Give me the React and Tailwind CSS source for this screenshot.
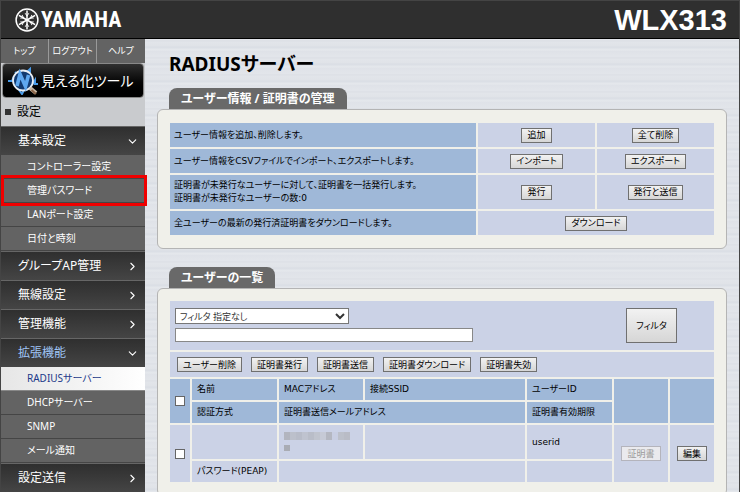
import { ChevronDown, ChevronRight } from 'lucide-react';
import clsx from 'clsx';

const menu = [
  {
    label: '基本設定',
    open: true,
    items: ['コントローラー設定', '管理パスワード', 'LANポート設定', '日付と時刻'],
  },
  { label: 'グループAP管理' },
  { label: '無線設定' },
  { label: '管理機能' },
  {
    label: '拡張機能',
    open: true,
    active: true,
    items: ['RADIUSサーバー', 'DHCPサーバー', 'SNMP', 'メール通知'],
  },
  { label: '設定送信' },
];

const highlighted = '管理パスワード';
const current = 'RADIUSサーバー';

const bulkActions = ['ユーザー削除', '証明書発行', '証明書送信', '証明書ダウンロード', '証明書失効'];

function Button({ children, className, ...props }) {
  return (
    <button
      type="button"
      className={clsx(
        'h-[15px] whitespace-nowrap border border-[#707070] bg-linear-to-b from-[#f2f2f2] to-[#d6d6d6] px-[5px] text-[9px] leading-[12px] text-black disabled:border-[#b4b4bc] disabled:from-[#eaeaee] disabled:to-[#eaeaee] disabled:text-[#9a9a9a]',
        className
      )}
      {...props}
    >
      {children}
    </button>
  );
}

function TuningForkMark() {
  return (
    <svg viewBox="0 0 24 24" className="size-6" fill="none" stroke="#fff" aria-hidden="true">
      <circle cx="12" cy="12" r="10.9" strokeWidth="1.5" />
      {[0, 60, 120, 180, 240, 300].map((deg) => (
        <g key={deg} transform={`rotate(${deg} 12 12)`}>
          <path d="M12 12V2.6" strokeWidth="1.5" />
          <path d="M10.2 5.2L12 8.2L13.8 5.2" strokeWidth="0.9" />
        </g>
      ))}
    </svg>
  );
}

function WaveLens() {
  return (
    <svg viewBox="0 0 32 28" className="h-7 w-8 shrink-0" fill="none" aria-hidden="true">
      <path
        d="M1 14H5L7 9M8 5L11 8M12 23L15 27L17 23M20 5L23 2V7M25 18L28 13V17H31"
        stroke="#4a9be8"
        strokeWidth="2"
      />
      <circle cx="16" cy="13.5" r="10" fill="#123a70" stroke="#e8eef5" strokeWidth="1.8" />
      <path d="M10 19L13 7L18.5 19.5L21.5 8" stroke="#5fa8f0" strokeWidth="3.6" />
      <path d="M23 21L29 26" stroke="#c9b8a4" strokeWidth="4" />
      <path d="M24.5 23L29 27" stroke="#8a6448" strokeWidth="2" />
    </svg>
  );
}

function Header() {
  return (
    <header className="flex h-[38px] items-center justify-between border-b border-black bg-[#2f2f2f] pr-3 pl-3.5 text-white">
      <a href="#top" className="flex items-center gap-0.5" aria-label="YAMAHA">
        <TuningForkMark />
        <span className="font-['Liberation_Sans_Narrow','Roboto_Condensed','Open_Sans_Condensed','Liberation_Sans',sans-serif] text-[22px] leading-6 font-bold">
          YAMAHA
        </span>
      </a>
      <span className="font-['Liberation_Sans',sans-serif] text-[29px] leading-8 font-bold">
        WLX313
      </span>
    </header>
  );
}

function MenuItem({ label }) {
  const isCurrent = label === current;
  return (
    <li
      className={clsx(
        'relative h-6 border-b',
        isCurrent ? 'border-[#888] bg-linear-to-r from-[#e6e6e6] to-white' : 'border-[#454545] bg-[#636363]'
      )}
    >
      <a
        href="#item"
        className={clsx(
          'flex h-full items-center pl-[26px] text-[10px]',
          isCurrent ? 'text-[#1c3a8a]' : 'text-white'
        )}
      >
        {label}
      </a>
      {label === highlighted && (
        <span className="pointer-events-none absolute -top-1 -right-0.5 -bottom-1 left-0 z-10 border-3 border-[#f00000]" />
      )}
    </li>
  );
}

function Sidebar() {
  return (
    <nav className="w-36 shrink-0 bg-[#636363]">
      <div className="grid h-6 grid-cols-3 divide-x divide-[#999] text-[9px] text-white">
        {['トップ', 'ログアウト', 'ヘルプ'].map((label) => (
          <a key={label} href="#nav" className="flex items-center justify-center whitespace-nowrap">
            {label}
          </a>
        ))}
      </div>
      <div className="bg-[#c9cbce] px-px">
        <a
          href="#visualize"
          className="flex h-[35px] items-center gap-0.5 rounded-sm border border-[#888] bg-linear-to-b from-[#303030] via-[#0a0a0a] to-black pl-1 text-[14px] whitespace-nowrap text-white"
        >
          <WaveLens />
          見える化ツール
        </a>
        <h2 className="flex h-7 items-center gap-1.5 pl-[3px] text-[12px] text-black">
          <span className="size-1.5 bg-[#333]" />
          設定
        </h2>
      </div>
      <ul>
        {menu.map(({ label, open, active, items }) => {
          const Chevron = open ? ChevronDown : ChevronRight;
          return (
            <li key={label}>
              <button
                type="button"
                aria-expanded={!!open}
                className={clsx(
                  'flex h-[29px] w-full items-center justify-between border-t border-[#666] bg-linear-to-b from-[#2f2f2f] to-[#454545] pr-1.5 pl-[17px] text-[12px]',
                  active ? 'text-[#9fc4f5]' : 'text-white'
                )}
              >
                {label}
                <Chevron size={13} strokeWidth={2} className="text-white" />
              </button>
              {items && (
                <ul>
                  {items.map((item) => (
                    <MenuItem key={item} label={item} />
                  ))}
                </ul>
              )}
            </li>
          );
        })}
      </ul>
    </nav>
  );
}

function Panel({ title, className, children }) {
  return (
    <section className={clsx('flex flex-col', className)}>
      <h2 className="ml-3 flex h-[21px] items-center self-start rounded-t-lg bg-[#696969] px-3 text-[12px] leading-4 font-bold text-white">
        {title}
      </h2>
      <div className="grow rounded-md border border-[#b4b4b4] bg-[#f0f0ea] px-2.5 py-[11px]">{children}</div>
    </section>
  );
}

const tableText =
  "w-full table-fixed border-separate border-spacing-0.5 font-['DejaVu_Sans','Noto_Sans_CJK_JP',sans-serif] text-[9px] leading-[13px]";
const labelCell = 'bg-[#9fb8d8] px-1 text-left font-normal';
const actionCell = 'bg-[#cbd2e6] text-center';

function ManagePanel() {
  return (
    <Panel title="ユーザー情報 / 証明書の管理">
      <table className={tableText}>
        <colgroup>
          <col />
          <col className="w-[117px]" />
          <col className="w-[117px]" />
        </colgroup>
        <tbody>
          <tr className="h-6">
            <th scope="row" className={labelCell}>ユーザー情報を追加、削除します。</th>
            <td className={actionCell}><Button>追加</Button></td>
            <td className={actionCell}><Button>全て削除</Button></td>
          </tr>
          <tr className="h-6">
            <th scope="row" className={labelCell}>ユーザー情報をCSVファイルでインポート、エクスポートします。</th>
            <td className={actionCell}><Button>インポート</Button></td>
            <td className={actionCell}><Button>エクスポート</Button></td>
          </tr>
          <tr className="h-[34px]">
            <th scope="row" className={labelCell}>
              証明書が未発行なユーザーに対して、証明書を一括発行します。
              <br />
              証明書が未発行なユーザーの数:0
            </th>
            <td className={actionCell}><Button>発行</Button></td>
            <td className={actionCell}><Button>発行と送信</Button></td>
          </tr>
          <tr className="h-6">
            <th scope="row" className={labelCell}>全ユーザーの最新の発行済証明書をダウンロードします。</th>
            <td colSpan={2} className={actionCell}><Button>ダウンロード</Button></td>
          </tr>
        </tbody>
      </table>
    </Panel>
  );
}

// Masked MAC address
function MaskedAddress() {
  const blocks = ['#b2b5bf', '#bcc0cb', '#b8bcc8', '#bfc3cf', '#b9bdc8', '#c0c4ce', '#c6cad6', '#b4b7c1', '#c8cee2', '#bcc0ca', '#b9bcc6'];
  return (
    <svg viewBox="0 0 68 20" className="h-5 w-17" role="img" aria-label="MAC">
      {blocks.map((fill, i) => (
        <rect key={i} x={i * 6} y="0" width="6" height="8" fill={fill} />
      ))}
      <rect x="0" y="13" width="6" height="6" fill="#a9acb4" />
    </svg>
  );
}

const headCell = 'bg-[#9fb8d8] px-[5px] text-left font-normal';
const bodyCell = 'bg-[#cbd2e6] px-[5px]';

function UsersPanel() {
  return (
    <Panel title="ユーザーの一覧" className="mt-[18px] grow">
      <div className="mx-0.5 mt-px flex justify-between bg-[#cbd2e6] py-[7px] pr-[37px] pl-[5px]">
        <div className="flex w-[298px] flex-col gap-1">
          <select
            aria-label="フィルタ"
            className="h-4 w-[174px] rounded-none border border-[#777] bg-white text-[9px] leading-3 text-[#333]"
          >
            <option>フィルタ 指定なし</option>
          </select>
          <input
            type="text"
            aria-label="フィルタ文字列"
            className="h-3.5 w-full border border-[#888] bg-white text-[9px]"
          />
        </div>
        <Button className="h-[35px] w-[51px]">フィルタ</Button>
      </div>
      <div className="mx-0.5 mt-0.5 flex h-[25px] items-center gap-[9px] bg-[#cbd2e6] px-[7px]">
        {bulkActions.map((label) => (
          <Button key={label}>{label}</Button>
        ))}
      </div>
      <table className={tableText}>
        <colgroup>
          <col className="w-5" />
          <col className="w-[85px]" />
          <col className="w-[84px]" />
          <col />
          <col className="w-[85px]" />
          <col className="w-[54px]" />
          <col className="w-[44px]" />
        </colgroup>
        <thead>
          <tr className="h-[21px]">
            <th rowSpan={2} className="bg-[#9fb8d8] p-0 align-middle">
              <input type="checkbox" aria-label="すべて選択" className="mx-auto block size-[10px] appearance-none border border-[#666] bg-white" />
            </th>
            <th className={headCell}>名前</th>
            <th className={headCell}>MACアドレス</th>
            <th className={headCell}>接続SSID</th>
            <th className={headCell}>ユーザーID</th>
            <th rowSpan={2} className={headCell} />
            <th rowSpan={2} className={headCell} />
          </tr>
          <tr className="h-[21px]">
            <th className={headCell}>認証方式</th>
            <th colSpan={2} className={headCell}>証明書送信メールアドレス</th>
            <th className={headCell}>証明書有効期限</th>
          </tr>
        </thead>
        <tbody>
          <tr className="h-[34px]">
            <td rowSpan={2} className="bg-[#cbd2e6] p-0 align-middle">
              <input type="checkbox" aria-label="userid を選択" className="mx-auto block size-[10px] appearance-none border border-[#666] bg-white" />
            </td>
            <td className={bodyCell} />
            <td className={bodyCell}><MaskedAddress /></td>
            <td className={bodyCell} />
            <td className={bodyCell}>userid</td>
            <td rowSpan={2} className="bg-[#cbd2e6] text-center"><Button disabled>証明書</Button></td>
            <td rowSpan={2} className="bg-[#cbd2e6] text-center"><Button>編集</Button></td>
          </tr>
          <tr className="h-[21px]">
            <td className={clsx(bodyCell, 'whitespace-nowrap')}>パスワード(PEAP)</td>
            <td colSpan={2} className={bodyCell} />
            <td className={bodyCell} />
          </tr>
        </tbody>
      </table>
    </Panel>
  );
}

export default function App() {
  return (
    <div
      lang="ja"
      className="flex min-h-screen flex-col border border-[#444] font-['Noto_Sans','Noto_Sans_CJK_JP',sans-serif] [font-feature-settings:'palt']"
    >
      <Header />
      <div className="flex grow">
        <Sidebar />
        <main className="flex grow flex-col bg-[#dfe3e8] bg-[repeating-linear-gradient(180deg,#e4e7ec_0px,#dcdfe5_2px,#e2e5ea_3px,#e0e3e8_7px,#d9dde4_8px,#e6e9ed_11px,#dfe2e8_12px,#e2e5ea_17px)] px-3">
          <h1 className="mt-3 mb-[11px] ml-3 text-[19px] leading-[26px] font-bold text-black">
            RADIUSサーバー
          </h1>
          <ManagePanel />
          <UsersPanel />
        </main>
      </div>
    </div>
  );
}
